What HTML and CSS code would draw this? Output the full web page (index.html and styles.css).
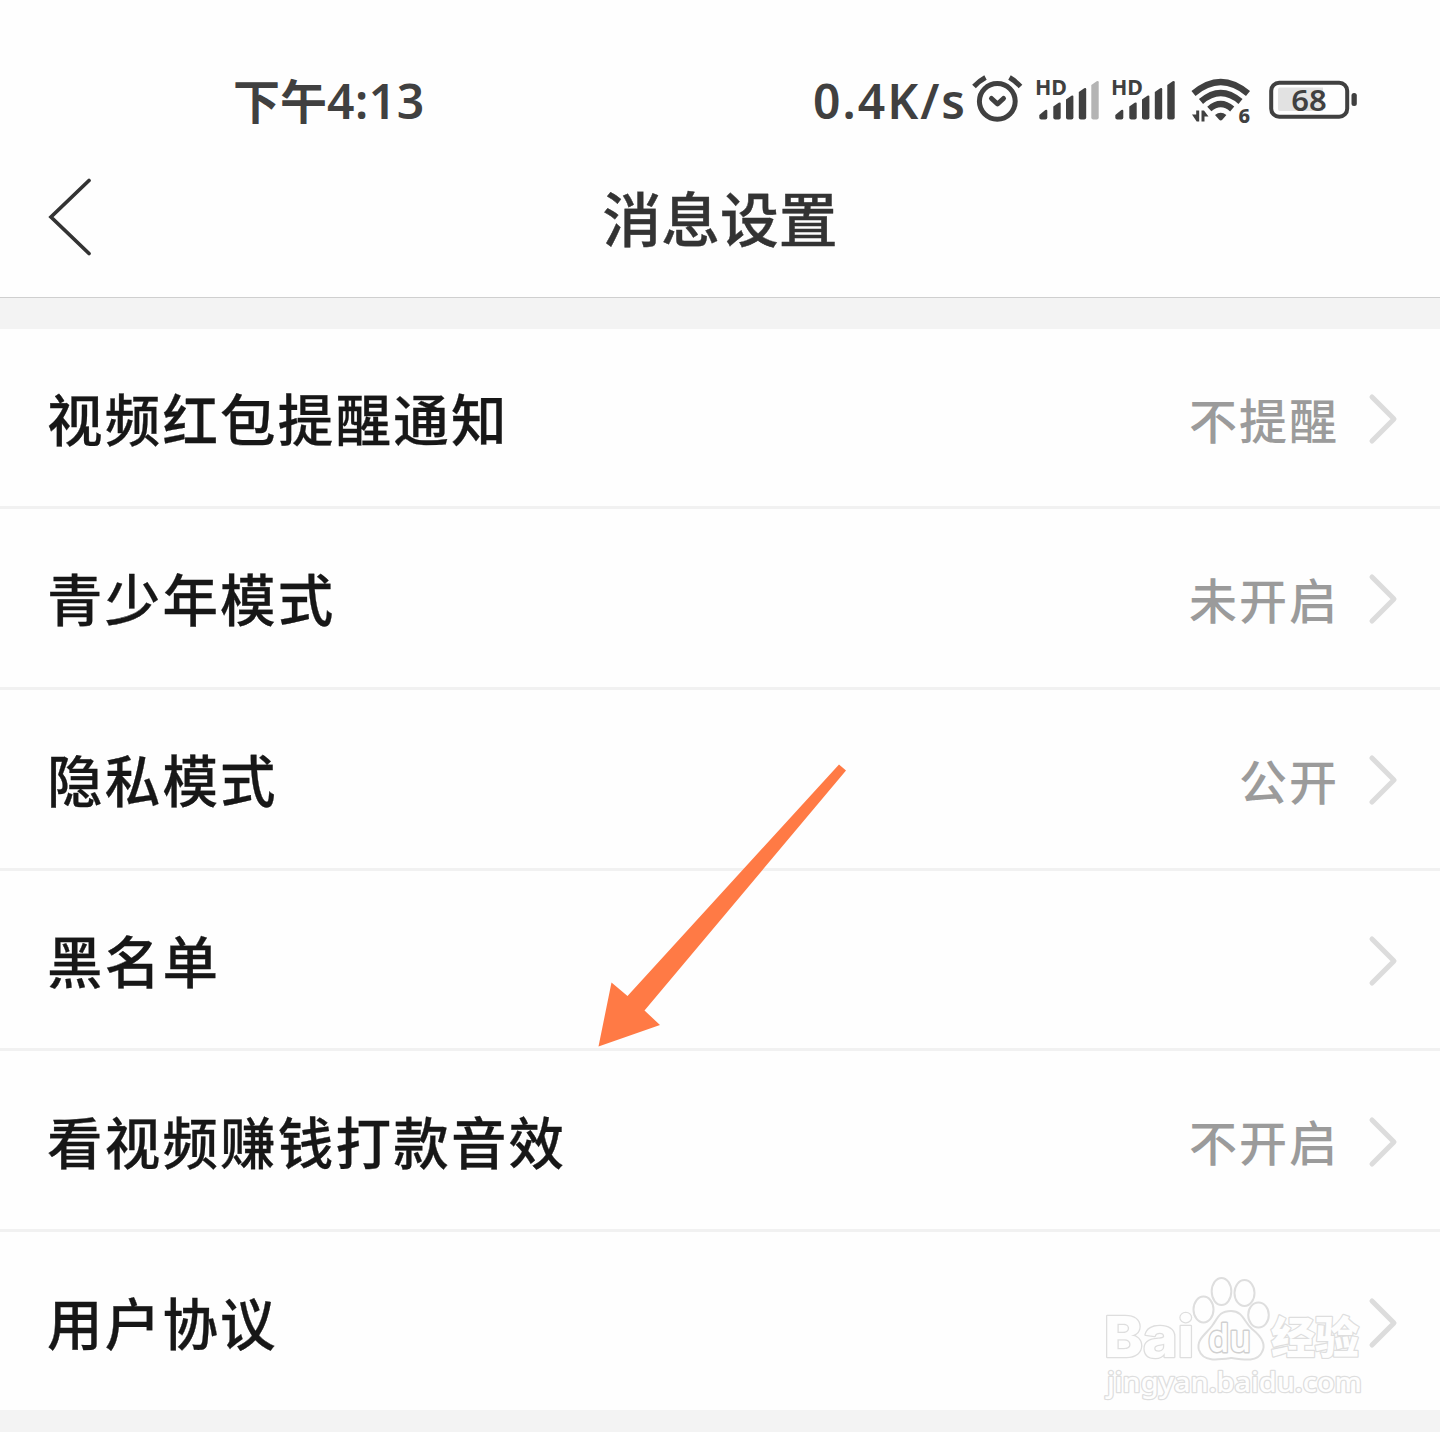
FILE: index.html
```html
<!DOCTYPE html>
<html lang="zh-CN">
<head>
<meta charset="utf-8">
<title>消息设置</title>
<link rel="stylesheet" href="styles.css">
</head>
<body>
<div class="screen">
  <header class="header">
    <div class="status">
      <div class="clock"><span class="cjk">下午</span><span class="digits">4:13</span></div>
      <div class="speed">0.4K/s</div>
      <svg class="icons" width="400" height="80" viewBox="960 60 400 80">
        <g fill="none" stroke="#404040" stroke-width="5">
          <circle cx="997.3" cy="101.3" r="17.9"/>
          <path d="M991.5 98.500L997.500 104L1003.500 98.500" stroke-linecap="round" stroke-linejoin="round"/>
          <path d="M974 86.500Q979 81 985.500 77.500M1020.500 86.500Q1015.500 81 1009.500 77.500"/>
        </g>
        <g id="bars" fill="#404040">
          <path d="M1039.300 115l6-5q2-1 2 1v6.500q0 2-2 2h-4q-2 0-2-2z"/>
          <path d="M1053.300 106.500l5.400-3.700q2-1 2 1v13.700q0 2-2 2h-3.400q-2 0-2-2z"/>
          <path d="M1066 99.500l5.400-3.700q2-1 2 1v20.700q0 2-2 2h-3.400q-2 0-2-2z"/>
          <path d="M1078.800 92l5.400-3.700q2-1 2 1v28.200q0 2-2 2h-3.400q-2 0-2-2z"/>
        </g>
        <path d="M1091.300 85l5.400-3.700q2-1 2 1v35.200q0 2-2 2h-3.400q-2 0-2-2z" fill="#b4b4b4"/>
        <use href="#bars" x="76"/>
        <path d="M1167.300 85l5.400-3.700q2-1 2 1v35.200q0 2-2 2h-3.400q-2 0-2-2z" fill="#404040"/>
        <g class="hd">
          <text x="1035" y="94.500" textLength="32" lengthAdjust="spacingAndGlyphs">HD</text>
          <text x="1111" y="94.500" textLength="32" lengthAdjust="spacingAndGlyphs">HD</text>
        </g>
        <g fill="none" stroke="#404040" stroke-width="6.300">
          <path d="M1193.500 93.500Q1220.700 70.500 1248 93.500"/>
          <path d="M1201 101.500Q1220.700 84.500 1240.500 101.500"/>
          <path d="M1209.300 109Q1220.700 99 1232.200 109"/>
        </g>
        <path d="M1215 115Q1220.700 110.500 1226.400 115L1222.500 119.500Q1220.700 121.500 1219 119.500z" fill="#404040"/>
        <path d="M1192 114.500h4.200v-4h3v11h-2.500zM1201.500 121.500v-11h2.500l4.500 6h-4v5z" fill="#404040"/>
        <text class="six" x="1238.500" y="122.500">6</text>
        <rect x="1271.200" y="82.700" width="76" height="34" rx="8" fill="none" stroke="#404040" stroke-width="4"/>
        <path d="M1280 87.500h43v23.500h-43q-2 0-2-2v-19.500q0-2 2-2z" fill="#e2e2e2"/>
        <rect x="1351.500" y="93" width="5.300" height="13" rx="2.500" fill="#404040"/>
        <text class="level" x="1291.300" y="111" textLength="35.500" lengthAdjust="spacingAndGlyphs">68</text>
      </svg>
    </div>
    <div class="nav">
      <svg class="back" width="48" height="84" viewBox="46 175 48 84"><path d="M89 180.500L51 217L89 253.500" fill="none" stroke="#333" stroke-width="3.700" stroke-linecap="round"/></svg>
      <h1 class="title">消息设置</h1>
    </div>
  </header>
  <main class="list">
    <div class="row"><span class="label">视频红包提醒通知</span><span class="value">不提醒</span><svg class="chev" viewBox="0 0 34 54"><path d="M5 5L27 27L5 49"/></svg></div>
    <div class="row"><span class="label">青少年模式</span><span class="value">未开启</span><svg class="chev" viewBox="0 0 34 54"><path d="M5 5L27 27L5 49"/></svg></div>
    <div class="row"><span class="label">隐私模式</span><span class="value">公开</span><svg class="chev" viewBox="0 0 34 54"><path d="M5 5L27 27L5 49"/></svg></div>
    <div class="row"><span class="label">黑名单</span><svg class="chev" viewBox="0 0 34 54"><path d="M5 5L27 27L5 49"/></svg></div>
    <div class="row"><span class="label">看视频赚钱打款音效</span><span class="value">不开启</span><svg class="chev" viewBox="0 0 34 54"><path d="M5 5L27 27L5 49"/></svg></div>
    <div class="row"><span class="label">用户协议</span><svg class="chev" viewBox="0 0 34 54"><path d="M5 5L27 27L5 49"/></svg></div>
  </main>
  <svg class="arrow" width="250" height="284" viewBox="597 764 250 284"><path d="M839 764.500L846 770.500L644.500 1010.500L660 1025L598.500 1046.500L611.500 982.500L627.500 996z" fill="#ff7a45"/></svg>
  <svg class="watermark" width="270" height="130" viewBox="1100 1272 270 130">
    <g class="mark">
      <text class="brand" x="1104" y="1357" textLength="90" lengthAdjust="spacingAndGlyphs">Bai</text>
      <ellipse cx="1203.500" cy="1309.500" rx="10" ry="13"/>
      <ellipse cx="1221.500" cy="1291.500" rx="9.800" ry="13.500"/>
      <ellipse cx="1244.500" cy="1293" rx="10" ry="13"/>
      <ellipse cx="1258.500" cy="1315" rx="10.300" ry="12.500"/>
      <path d="M1231 1311C1243 1311 1244 1322 1252 1329C1262 1337 1266 1345 1262 1352C1258 1362 1245 1360 1231 1358C1217 1360 1203 1362 1199 1350C1196 1340 1205 1335 1212 1326C1218 1318 1219 1311 1231 1311z"/>
      <text class="du" x="1208" y="1352" textLength="43" lengthAdjust="spacingAndGlyphs">du</text>
      <text class="jy" x="1271" y="1354" textLength="88">经验</text>
      <text class="url" x="1107" y="1392" textLength="255" lengthAdjust="spacingAndGlyphs">jingyan.baidu.com</text>
    </g>
  </svg>
</div>
</body>
</html>
```
FILE: styles.css
```css
* { box-sizing: border-box; }
body { margin: 0; background: #f3f3f3; font-family: "Noto Sans CJK SC", sans-serif; }
.screen { position: relative; width: 1440px; height: 1432px; overflow: hidden; background: #f3f3f3; }
.header { height: 298px; background: #fefefe; border-bottom: 1px solid #cfcfcf; }
.status { display: flex; height: 140px; padding: 60px 80px 0 233px; color: #404040; }
.clock { display: flex; width: 580px; line-height: 80px; }
.cjk { font-size: 47px; font-weight: 700; line-height: 78px; }
.digits, .speed { font-family: "Noto Sans", sans-serif; font-weight: 600; font-size: 48px; }
.digits { letter-spacing: 0.500px; line-height: 82px; }
.speed { width: 147px; line-height: 81px; letter-spacing: 2px; white-space: nowrap; }
.icons { flex: none; }
.hd { font: 700 21px "Noto Sans", sans-serif; fill: #404040; }
.six { font: 800 20px "Noto Sans", sans-serif; fill: #404040; }
.level { font: 600 29.500px "Noto Sans", sans-serif; fill: #404040; }
.nav { display: grid; grid-template-columns: 48px 1fr 48px; align-items: center; height: 157px; padding: 0 46px; }
.back { margin-top: -3px; }
.title { margin: -4px 0 0; color: #333; font-size: 58.800px; font-weight: 500; line-height: 80px; text-align: center; -webkit-text-stroke: 0.400px #333; }
.list { height: 1081px; margin-top: 31px; display: flex; flex-direction: column; background: #fefefe; }
.row { flex: none; display: flex; align-items: center; height: 180.750px; padding: 0 39px 0 48px; border-bottom: 3px solid #f1f1f1; }
.row:first-child { height: 180px; }
.row:last-child { height: 178px; border-bottom: 0; }
.label { margin: -1px auto 0 -1px; color: #171717; font-size: 55.500px; font-weight: 500; letter-spacing: 2.200px; line-height: 80px; -webkit-text-stroke: 0.300px #171717; }
.value { margin: 0 28px 0 0; color: #9b9b9b; font-size: 48px; font-weight: 500; letter-spacing: 2px; line-height: 70px; }
.chev { width: 34px; height: 54px; margin-top: 3px; fill: none; stroke: #dcdcdc; stroke-width: 5; stroke-linecap: round; stroke-linejoin: round; }
.arrow { position: absolute; left: 597px; top: 764px; }
.watermark { position: absolute; left: 1100px; top: 1272px; }
.mark { fill: #fefefe; stroke: #dedede; stroke-width: 2.500; paint-order: stroke; stroke-linejoin: round; }
.mark ellipse, .mark path { stroke-width: 2; paint-order: normal; }
.brand { font: 800 56px Inter, sans-serif; }
.mark .du { font: 600 38px "Noto Sans", sans-serif; stroke: #d0d0d0; stroke-width: 3; }
.jy { font: 900 44px "Noto Sans CJK SC", sans-serif; }
.url { font: 500 27px "Noto Sans", sans-serif; }
```
